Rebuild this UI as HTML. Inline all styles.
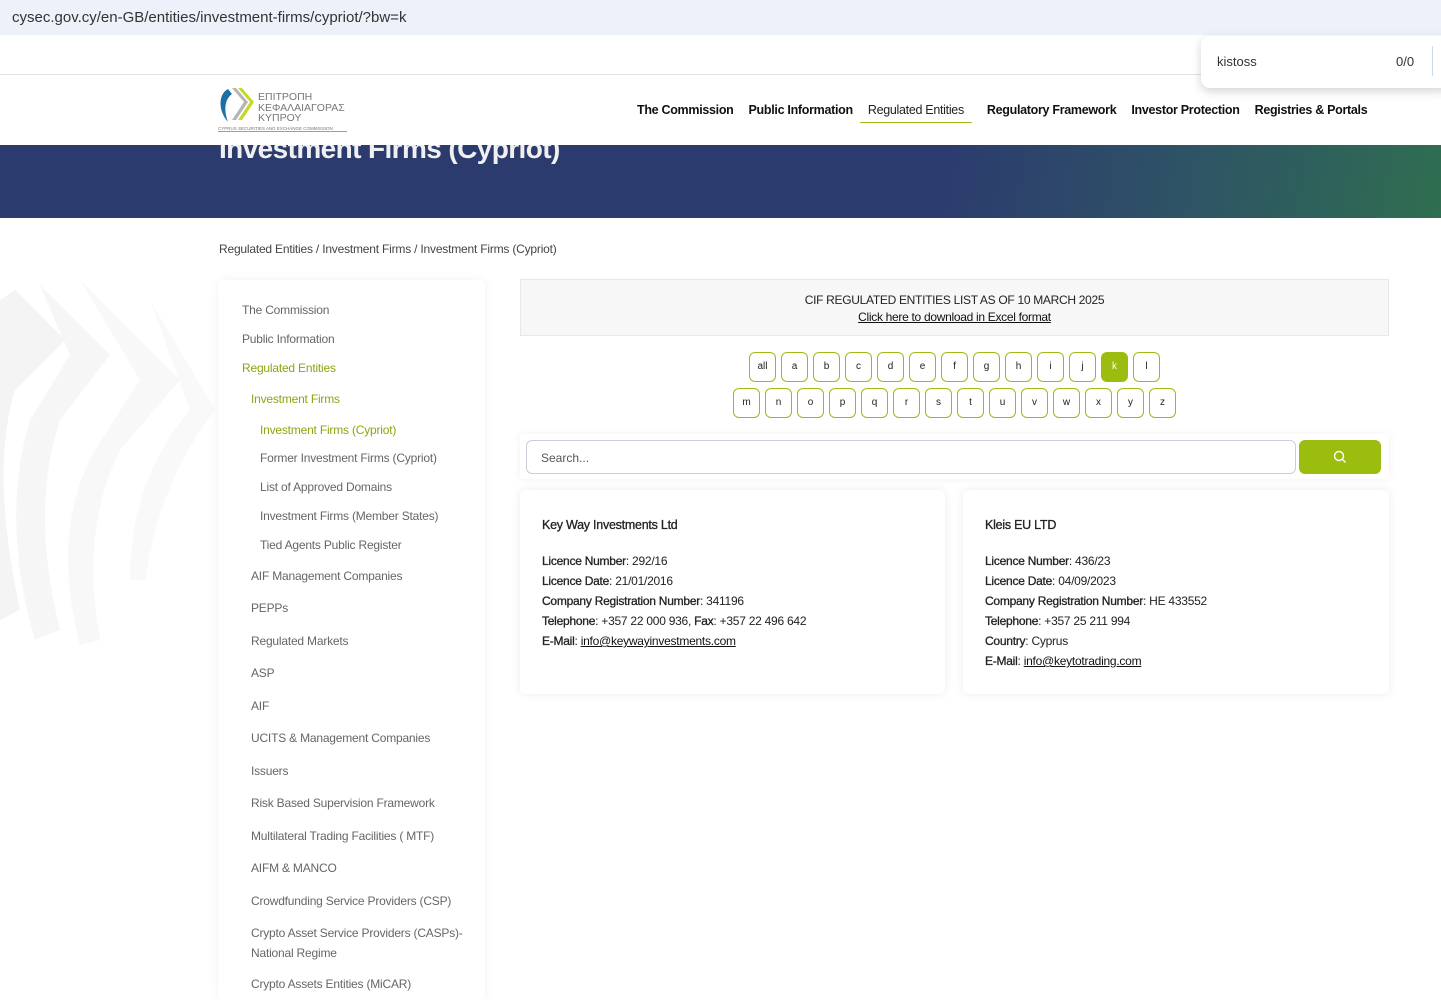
<!DOCTYPE html>
<html><head><meta charset="utf-8"><style>
*{box-sizing:border-box;margin:0;padding:0}
body{width:1441px;height:986px;overflow:hidden;background:#fff;font-family:"Liberation Sans",Arial,sans-serif;color:#222;position:relative}
.url{position:absolute;left:0;top:0;width:1441px;height:35px;background:#edf1f9;font-size:15px;color:#333;padding:9px 0 0 12px}
.top{position:absolute;top:35px;left:0;width:1441px;height:40px;border-bottom:1px solid #e2e2e2;background:#fff}
.hdr{position:absolute;top:76px;left:0;width:1441px;height:69px;background:#fff;z-index:2}
.nav{position:absolute;top:103px;left:637px;font-size:12.5px;font-weight:bold;color:#111;white-space:nowrap;letter-spacing:-.3px}
.nav span{margin-right:15px;display:inline-block;padding-bottom:5px}
.nav .act{font-weight:normal;color:#222;border-bottom:1px solid #9bbd10;padding:0 8px 5px 8px;margin-left:-8px}
.banner{position:absolute;top:145px;left:0;width:1441px;height:73px;background:linear-gradient(100deg,#2c3b6e 0%,#2c3b6e 65%,#2e5366 82%,#2f6e50 100%)}
.banner h1{position:absolute;left:219px;top:-12px;font-size:28px;color:#f0f0f0;font-weight:bold;letter-spacing:-.6px}
.popup{position:absolute;left:1201px;top:36px;width:250px;height:52px;background:#fff;border-radius:9px;box-shadow:0 3px 10px rgba(0,0,0,.18);z-index:5;font-size:13px;color:#333}
.crumb{position:absolute;left:219px;top:242px;font-size:12px;color:#444;letter-spacing:-.2px}
.side{position:absolute;left:218px;top:280px;width:267px;height:720px;background:#fff;border-radius:5px;box-shadow:0 0 10px rgba(0,0,0,.06);font-size:12px;color:#666;letter-spacing:-.2px}
.side div{position:absolute;white-space:nowrap}
.g{color:#8ba70e}
.cif{position:absolute;left:520px;top:279px;width:869px;height:57px;background:#f7f7f7;border:1px solid #e8e8e8;text-align:center;font-size:12px;color:#222;padding-top:12px;line-height:17px;letter-spacing:-.3px}
.cif u{color:#111}
.letters{position:absolute;left:520px;width:869px;text-align:center;font-size:10px}
.letters span{display:inline-block;width:27px;height:30px;border:1.3px solid #9bbd10;border-radius:6px;line-height:28px;margin:0 2.5px;color:#222;text-align:center}
.letters .on{background:#9bbd10;color:#fff}
.sbox{position:absolute;left:520px;top:434px;width:869px;height:45px;background:#fff;box-shadow:0 0 8px rgba(0,0,0,.06)}
.sin{position:absolute;left:6px;top:6px;width:770px;height:34px;border:1px solid #ccd;border-radius:6px;font-size:12px;color:#555;padding:10px 14px}
.sbtn{position:absolute;left:779px;top:6px;width:82px;height:34px;background:#9bbd10;border-radius:6px}
.card{position:absolute;top:490px;width:425px;height:204px;background:#fff;border-radius:6px;box-shadow:0 0 10px rgba(0,0,0,.08);font-size:12px;color:#222;padding:25px 22px;line-height:20px;letter-spacing:-.25px}
.card h3{font-size:12.5px;font-weight:normal;color:#222;margin-bottom:16px;-webkit-text-stroke:.3px #222}
.card b{font-weight:normal;-webkit-text-stroke:.3px #222}
.card u{color:#111}
</style></head><body>
<div class="url">cysec.gov.cy/en-GB/entities/investment-firms/cypriot/?bw=k</div>
<div class="top"></div>
<div class="popup"><span style="position:absolute;left:16px;top:18px">kistoss</span><span style="position:absolute;left:195px;top:18px">0/0</span><span style="position:absolute;left:231px;top:10px;width:1px;height:30px;background:#cdd9ee"></span></div>
<svg style="position:absolute;left:0;top:280px" width="230" height="380" viewBox="0 0 230 380">
<path d="M15 10 L65 60 L15 110 Q-10 190 20 330 L0 340 L0 20Z" fill="#f4f4f4"/>
<path d="M40 5 L110 75 L60 140 Q30 230 60 350 L35 360 Q0 240 30 140 L70 75Z" fill="#f6f6f6"/>
<path d="M80 0 L180 100 L120 170 Q80 250 100 360 L80 365 Q50 250 95 170 L140 100Z" fill="#f8f8f8"/>
<path d="M150 20 L215 130 Q160 200 145 300 L130 300 Q130 200 190 130Z" fill="#f9f9f9"/>
</svg>
<div class="hdr">
<svg style="position:absolute;left:218px;top:10px" width="40" height="40" viewBox="0 0 40 40">
<path d="M10 3 C0 8 0 25 10 36 C6 25 6 14 14 8 Z" fill="#1d6fa8"/>
<path d="M14 2 L26 16 L14 34 L18 34 L30 16 L18 2Z" fill="#b5b5b5"/>
<path d="M20 2 L32 16 L20 34 L24 34 L36 16 L24 2Z" fill="#c6d82a"/>
</svg>
<div style="position:absolute;left:258px;top:16px;font-size:10.5px;line-height:10.5px;color:#777">ΕΠΙΤΡΟΠΗ<br>ΚΕΦΑΛΑΙΑΓΟΡΑΣ<br>ΚΥΠΡΟΥ</div>
<div style="position:absolute;left:218px;top:50px;font-size:4.5px;color:#777;border-bottom:1px solid #5ab4dc;width:129px;white-space:nowrap">CYPRUS SECURITIES AND EXCHANGE COMMISSION</div>
</div>
<div class="nav" style="z-index:3"><span>The Commission</span><span>Public Information</span><span class="act">Regulated Entities</span><span>Regulatory Framework</span><span>Investor Protection</span><span>Registries &amp; Portals</span></div>
<div class="banner"><h1>Investment Firms (Cypriot)</h1></div>
<div class="crumb">Regulated Entities / Investment Firms / Investment Firms (Cypriot)</div>
<div class="side">
<div style="left:24px;top:23px">The Commission</div>
<div style="left:24px;top:52px">Public Information</div>
<div class="g" style="left:24px;top:81px">Regulated Entities</div>
<div class="g" style="left:33px;top:112px">Investment Firms</div>
<div class="g" style="left:42px;top:143px">Investment Firms (Cypriot)</div>
<div style="left:42px;top:171px">Former Investment Firms (Cypriot)</div>
<div style="left:42px;top:200px">List of Approved Domains</div>
<div style="left:42px;top:229px">Investment Firms (Member States)</div>
<div style="left:42px;top:258px">Tied Agents Public Register</div>
<div style="left:33px;top:289px">AIF Management Companies</div>
<div style="left:33px;top:321px">PEPPs</div>
<div style="left:33px;top:354px">Regulated Markets</div>
<div style="left:33px;top:386px">ASP</div>
<div style="left:33px;top:419px">AIF</div>
<div style="left:33px;top:451px">UCITS &amp; Management Companies</div>
<div style="left:33px;top:484px">Issuers</div>
<div style="left:33px;top:516px">Risk Based Supervision Framework</div>
<div style="left:33px;top:549px">Multilateral Trading Facilities ( MTF)</div>
<div style="left:33px;top:581px">AIFM &amp; MANCO</div>
<div style="left:33px;top:614px">Crowdfunding Service Providers (CSP)</div>
<div style="left:33px;line-height:20px;top:643px">Crypto Asset Service Providers (CASPs)-<br>National Regime</div>
<div style="left:33px;top:697px">Crypto Assets Entities (MiCAR)</div>
</div>
<div class="cif">CIF REGULATED ENTITIES LIST AS OF 10 MARCH 2025<br><u>Click here to download in Excel format</u></div>
<div class="letters" style="top:352px"><span>all</span><span>a</span><span>b</span><span>c</span><span>d</span><span>e</span><span>f</span><span>g</span><span>h</span><span>i</span><span>j</span><span class="on">k</span><span>l</span></div>
<div class="letters" style="top:388px"><span>m</span><span>n</span><span>o</span><span>p</span><span>q</span><span>r</span><span>s</span><span>t</span><span>u</span><span>v</span><span>w</span><span>x</span><span>y</span><span>z</span></div>
<div class="sbox"><div class="sin">Search...</div><div class="sbtn"><svg style="position:absolute;left:34px;top:10px" width="14" height="14" viewBox="0 0 14 14"><circle cx="6" cy="6" r="4.5" fill="none" stroke="#fff" stroke-width="1.4"/><path d="M9.3 9.3 L12.5 12.5" stroke="#fff" stroke-width="1.4"/></svg></div></div>
<div class="card" style="left:520px"><h3>Key Way Investments Ltd</h3>
<b>Licence Number</b>: 292/16<br><b>Licence Date</b>: 21/01/2016<br><b>Company Registration Number</b>: 341196<br><b>Telephone</b>: +357 22 000 936, <b>Fax</b>: +357 22 496 642<br><b>E-Mail</b>: <u>info@keywayinvestments.com</u></div>
<div class="card" style="left:963px;width:426px"><h3>Kleis EU LTD</h3>
<b>Licence Number</b>: 436/23<br><b>Licence Date</b>: 04/09/2023<br><b>Company Registration Number</b>: HE 433552<br><b>Telephone</b>: +357 25 211 994<br><b>Country</b>: Cyprus<br><b>E-Mail</b>: <u>info@keytotrading.com</u></div>
</body></html>
